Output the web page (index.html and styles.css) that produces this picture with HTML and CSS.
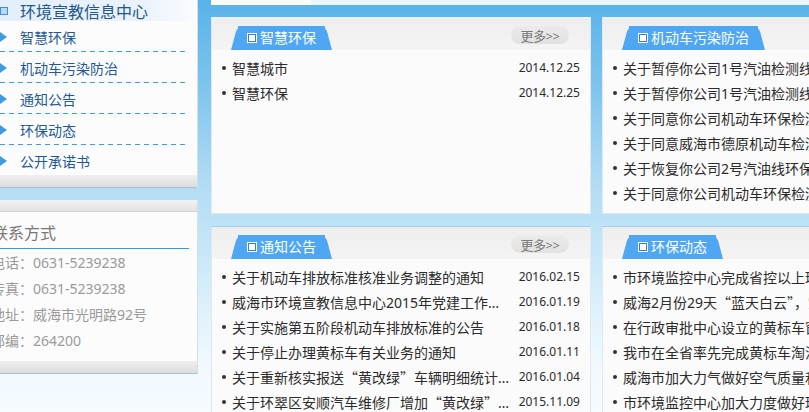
FILE: index.html
```html
<!DOCTYPE html>
<html lang="zh-CN">
<head>
  <meta charset="UTF-8" />
  <title>威海市环境宣教信息中心</title>
  <link rel="stylesheet" href="styles.css">
</head>
<body>
  <div class="page">
    <aside class="side">
      <div class="menu-box">
        <h2 class="menu-title"><i class="menu-icon"></i>环境宣教信息中心</h2>
        <ul class="menu">
          <li><a href="#">智慧环保</a></li>
          <li><a href="#">机动车污染防治</a></li>
          <li><a href="#">通知公告</a></li>
          <li><a href="#">环保动态</a></li>
          <li><a href="#">公开承诺书</a></li>
        </ul>
        <div class="box-foot"></div>
      </div>

      <div class="contact-box">
        <div class="box-cap"></div>
        <div class="contact">
          <h3>联系方式</h3>
          <p>电话：0631-5239238</p>
          <p>传真：0631-5239238</p>
          <p>地址：威海市光明路92号</p>
          <p>邮编：264200</p>
        </div>
        <div class="box-foot"></div>
      </div>
    </aside>

    <main class="main">
      <div class="top-strip"><span></span></div>

      <div class="row">
        <section class="panel">
          <div class="panel-head">
            <span class="tab"><i class="tab-icon"></i>智慧环保</span>
            <a class="more" href="#">更多&gt;&gt;</a>
          </div>
          <ul class="news">
            <li><a href="#">智慧城市</a><span class="date">2014.12.25</span></li>
            <li><a href="#">智慧环保</a><span class="date">2014.12.25</span></li>
          </ul>
        </section>

        <section class="panel">
          <div class="panel-head">
            <span class="tab"><i class="tab-icon"></i>机动车污染防治</span>
            <a class="more" href="#">更多&gt;&gt;</a>
          </div>
          <ul class="news">
            <li><a href="#">关于暂停你公司1号汽油检测线环保检测业务的通知</a><span class="date">2016.02.25</span></li>
            <li><a href="#">关于暂停你公司1号汽油检测线环保检测业务的通知</a><span class="date">2016.02.25</span></li>
            <li><a href="#">关于同意你公司机动车环保检测线恢复检测的通知</a><span class="date">2016.02.03</span></li>
            <li><a href="#">关于同意威海市德原机动车检测有限公司的批复</a><span class="date">2016.01.26</span></li>
            <li><a href="#">关于恢复你公司2号汽油线环保检测业务的通知</a><span class="date">2016.01.12</span></li>
            <li><a href="#">关于同意你公司机动车环保检测线恢复检测的通知</a><span class="date">2015.12.30</span></li>
          </ul>
        </section>
      </div>

      <div class="row">
        <section class="panel panel-low">
          <div class="panel-head">
            <span class="tab"><i class="tab-icon"></i>通知公告</span>
            <a class="more" href="#">更多&gt;&gt;</a>
          </div>
          <ul class="news">
            <li><a href="#">关于机动车排放标准核准业务调整的通知</a><span class="date">2016.02.15</span></li>
            <li><a href="#">威海市环境宣教信息中心2015年党建工作干部述职报告</a><span class="date">2016.01.19</span></li>
            <li><a href="#">关于实施第五阶段机动车排放标准的公告</a><span class="date">2016.01.18</span></li>
            <li><a href="#">关于停止办理黄标车有关业务的通知</a><span class="date">2016.01.11</span></li>
            <li><a href="#">关于重新核实报送<span class="q">“</span>黄改绿<span class="q">”</span>车辆明细统计表的通知</a><span class="date">2016.01.04</span></li>
            <li><a href="#">关于环翠区安顺汽车维修厂增加<span class="q">“</span>黄改绿<span class="q">”</span>业务的公示</a><span class="date">2015.11.09</span></li>
          </ul>
        </section>

        <section class="panel panel-low">
          <div class="panel-head">
            <span class="tab"><i class="tab-icon"></i>环保动态</span>
            <a class="more" href="#">更多&gt;&gt;</a>
          </div>
          <ul class="news">
            <li><a href="#">市环境监控中心完成省控以上环境监测任务</a><span class="date">2016.03.02</span></li>
            <li><a href="#">威海2月份29天<span class="q">“</span>蓝天白云<span class="q">”</span>，空气质量全省第一</a><span class="date">2016.03.01</span></li>
            <li><a href="#">在行政审批中心设立的黄标车窗口正式运行</a><span class="date">2016.02.26</span></li>
            <li><a href="#">我市在全省率先完成黄标车淘汰任务</a><span class="date">2016.01.20</span></li>
            <li><a href="#">威海市加大力气做好空气质量和机动车监管</a><span class="date">2016.01.15</span></li>
            <li><a href="#">市环境监控中心加大力度做好环境监测工作</a><span class="date">2016.01.08</span></li>
          </ul>
        </section>
      </div>
    </main>
  </div>
</body>
</html>
```

FILE: styles.css
```css
html, body {
  height: 100%;
  margin: 0;
  overflow: hidden;
}
body {
  font-family: "Noto Sans", "Noto Sans CJK SC", sans-serif;
  color: #2b2b2b;
  background: linear-gradient(#58b3e9 0, #7fc5ee 90px, #b3dcf4 185px, #c6e7f8 250px, #e2f3fc 320px, #f3faff 375px, #f5fbff 100%);
}
a {
  color: inherit;
  text-decoration: none;
}
ul, h2, h3, p {
  margin: 0;
  padding: 0;
  list-style: none;
  font-weight: normal;
}
.page {
  display: flex;
  align-items: flex-start;
  width: 1300px;
  margin-left: -10px;
}

/* left column */
.side {
  width: 208px;
  flex: none;
}
.menu-box, .contact-box {
  background: #fcfcfc;
  border-right: 1px solid #d5dfe6;
}
.menu-title {
  display: flex;
  align-items: center;
  height: 21px;
  padding-left: 10px;
  font-size: 16px;
  color: #24578b;
  background: linear-gradient(to right, #e2eefb, #eaf3fc 75%, #fbfcfd);
}
.menu-icon {
  width: 6px;
  height: 6px;
  margin: 1px 12px 0 0;
  border: 1px solid #3f8fd6;
  background: #b9d8f4;
}
.menu li {
  position: relative;
  height: 31px;
}
.menu li a {
  display: flex;
  align-items: center;
  height: 30px;
  padding: 2px 0 0 10px;
  box-sizing: border-box;
  font-size: 14px;
  color: #1f5a95;
}
.menu li a::before {
  content: "";
  width: 0;
  height: 0;
  margin-right: 13px;
  border-left: 7px solid #3e9be0;
  border-top: 5px solid transparent;
  border-bottom: 5px solid transparent;
}
.menu li::after {
  content: "";
  position: absolute;
  left: 10px;
  right: 8px;
  bottom: 0;
  height: 1px;
  background: repeating-linear-gradient(to right, #3a9fdc 0 5px, transparent 5px 9px);
}
.menu li:last-child {
  height: 30px;
}
.menu li:last-child::after {
  display: none;
}
.box-foot {
  height: 12px;
  background: linear-gradient(#f0f0f0, #dcdcdc);
  border-bottom: 1px solid #a8c2d2;
}
.contact-box {
  margin-top: 12px;
}
.box-cap {
  height: 11px;
  background: linear-gradient(#f2f2f2, #e3e3e3);
  border-bottom: 1px solid #d4d4d4;
}
.contact {
  padding: 9px 8px 7px 0;
}
.contact h3 {
  height: 28px;
  line-height: 24px;
  padding-left: 2px;
  box-sizing: border-box;
  font-size: 16px;
  color: #777;
  border-bottom: 1px solid #2a9fde;
}
.contact h3 + p {
  margin-top: 1px;
}
.contact p {
  height: 26px;
  line-height: 26px;
  padding-left: 1px;
  font-size: 14px;
  color: #9a9a9a;
}

/* main column */
.main {
  margin-left: 13px;
  flex: none;
}
.top-strip {
  height: 5px;
  width: 620px;
  background: #eaf6fc;
}
.top-strip span {
  display: block;
  width: 100px;
  height: 5px;
  background: #fdfdfd;
}
.row {
  display: flex;
  gap: 11px;
  margin-top: 12px;
}
.panel {
  width: 380px;
  height: 197px;
  box-sizing: border-box;
  background: #fbfbfb;
  border: 1px solid #e2e9ee;
  border-top-color: #eef3f6;
}
.panel-low {
  height: 200px;
  border-top-color: #9fd0ef;
}
.panel-head {
  display: flex;
  justify-content: space-between;
  align-items: flex-start;
  height: 32px;
  padding: 8px 21px 0 26px;
  box-sizing: border-box;
  background: linear-gradient(#eeeeee, #f4f4f4);
}
.tab {
  position: relative;
  z-index: 0;
  display: flex;
  align-items: center;
  height: 24px;
  line-height: 24px;
  padding: 0 9px;
  font-size: 14px;
  color: #fff;
  background: #4fa7f4;
}
.tab::before, .tab::after {
  content: "";
  position: absolute;
  top: 0;
  width: 14px;
  height: 24px;
  background: #4fa7f4;
  transform-origin: bottom;
  z-index: -1;
}
.tab::before {
  left: -7px;
  border-top-left-radius: 6px;
  transform: skewX(-15deg);
}
.tab::after {
  right: -7px;
  border-top-right-radius: 6px;
  transform: skewX(15deg);
}
.tab-icon {
  width: 10px;
  height: 10px;
  margin-right: 3px;
  background: #fff;
  box-shadow: inset 0 0 0 1px #fff, inset 0 0 0 2px #3b7fc4;
}
.more {
  display: flex;
  align-items: center;
  justify-content: center;
  width: 58px;
  height: 18px;
  border-radius: 9px;
  font-size: 13px;
  color: #7a7a7a;
  background: linear-gradient(#ebebeb, #e1e1e1);
  letter-spacing: -0.5px;
}
.news {
  padding: 5px 10px 0 10px;
}
.news li {
  display: flex;
  align-items: center;
  height: 25px;
}
.news li::before {
  content: "";
  flex: none;
  width: 4px;
  height: 4px;
  margin-right: 6px;
  border-radius: 50%;
  background: #333;
}
.news li a {
  flex: 1;
  min-width: 0;
  font-size: 14px;
  white-space: nowrap;
  overflow: hidden;
  text-overflow: ellipsis;
}
.q {
  font-family: "Noto Sans CJK SC", sans-serif;
}
.date {
  flex: none;
  width: 62px;
  margin-left: 6px;
  text-align: right;
  font-size: 12px;
}
```
